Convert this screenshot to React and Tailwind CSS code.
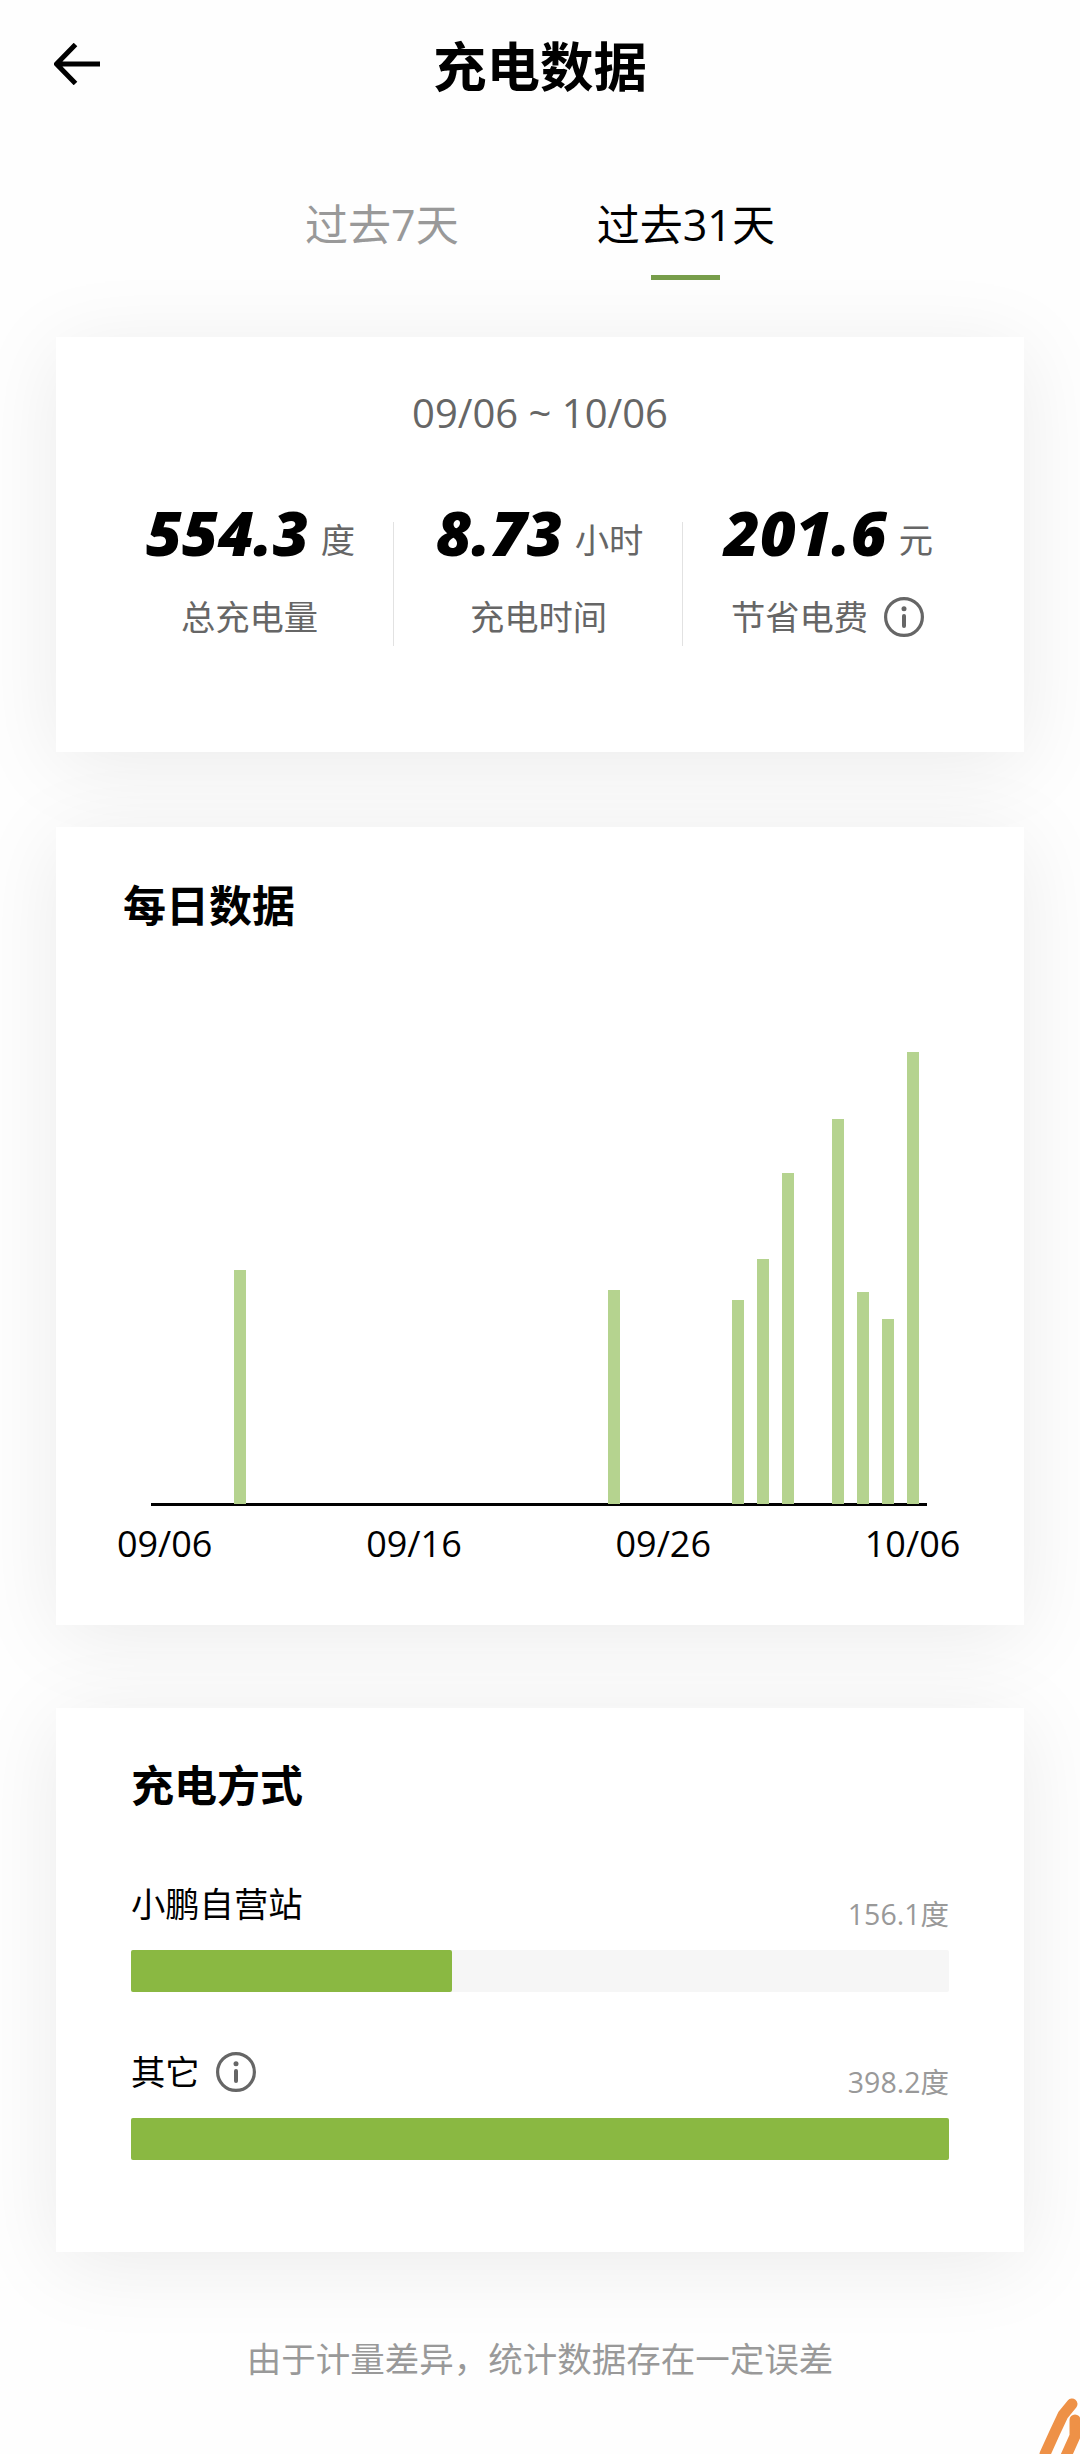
import React, { useState } from "react";

const DAYS = 31;

const daily = {
  3: 234,
  18: 214,
  23: 204,
  24: 245,
  25: 331,
  27: 385,
  28: 212,
  29: 185,
  30: 452,
};

const axisLabels = ["09/06", "09/16", "09/26", "10/06"];

const stats = [
  { value: "554.3", unit: "度", label: "总充电量" },
  { value: "8.73", unit: "小时", label: "充电时间" },
  { value: "201.6", unit: "元", label: "节省电费", info: true },
];

const methods = [
  { name: "小鹏自营站", value: 156.1 },
  { name: "其它", value: 398.2, info: true },
];

const InfoIcon = () => (
  <svg className="w-10 h-10 shrink-0 text-[#666]" viewBox="0 0 40 40" fill="none">
    <circle cx="20" cy="20" r="18.4" stroke="currentColor" strokeWidth="3.2" />
    <circle cx="20" cy="11.8" r="2.5" fill="currentColor" />
    <path d="M20 19v10" stroke="currentColor" strokeWidth="4" strokeLinecap="round" />
  </svg>
);

const Card = ({ className, children }) => (
  <section
    className={`mx-14 bg-white shadow-[0_12px_80px_rgba(0,0,0,0.08)] ${className}`}
  >
    {children}
  </section>
);

const Header = () => (
  <header className="grid grid-cols-[200px_1fr_200px] items-center h-[132px]">
    <button type="button" className="ml-[54px] -mt-1 w-[46px] h-[42px]" aria-label="返回">
      <svg viewBox="0 0 46 42" className="w-[46px] h-[42px]" fill="none" stroke="#000" strokeWidth="5">
        <path d="M21.5 1.5 2.5 21 21.5 40.5M2.5 21h43.5" strokeLinejoin="round" />
      </svg>
    </button>
    <h1 className="pt-0.5 text-center text-[53.5px] leading-[80px] font-bold">充电数据</h1>
  </header>
);

const Tabs = ({ active, onChange }) => (
  <nav className="flex justify-center gap-[138px] mt-[60px] h-[88px]">
    {["过去7天", "过去31天"].map((tab, i) => (
      <button
        key={tab}
        type="button"
        onClick={() => onChange(i)}
        className={`flex flex-col items-center text-[43px] leading-[66px] whitespace-nowrap ${
          active === i ? "text-black" : "text-[#999]"
        }`}
      >
        {tab}
        {active === i && <span className="mt-[17px] w-[69px] h-[5px] bg-[#779d4a]" />}
      </button>
    ))}
  </nav>
);

const Summary = () => (
  <Card className="mt-[57px] h-[415px] pt-[46px]">
    <p className="text-center text-[40px] leading-[60px] text-[#666]">09/06 ~ 10/06</p>
    <div className="flex mt-[47px] pl-[49px]">
      {stats.map((item, i) => (
        <div key={item.label} className="relative w-[289px]">
          <div className="flex items-end justify-center pt-[4px] pl-[2px] h-[80px] gap-[12px]">
            <span className="text-[62px] leading-[76px] font-extrabold italic">
              {item.value}
            </span>
            <span className="pb-[5px] text-[34.3px] leading-[50px] text-[#666]">
              {item.unit}
            </span>
          </div>
          <div className="flex items-center justify-center gap-[16px] mt-[22px] h-[50px] text-[34.3px] leading-[50px] text-[#666]">
            {item.label}
            {item.info && <InfoIcon />}
          </div>
          {i < 2 && <span className="absolute right-0 top-[32px] w-[1.5px] h-[124px] bg-[#e2e2e2]" />}
        </div>
      ))}
    </div>
  </Card>
);

const DailyChart = () => (
  <Card className="mt-[75px] h-[798px] pt-[47px]">
    <h2 className="ml-[67px] text-[43px] leading-[64px] font-bold">每日数据</h2>
    <div className="relative ml-[95px] mt-[86px] w-[776px] h-[482px] border-b-3 border-black">
      <div className="absolute left-[1.4px] bottom-[-1px] w-[773px] flex items-end">
        {Array.from({ length: DAYS }, (_, i) => (
          <div key={i} className="flex-1 flex justify-center">
            {daily[i] && <div className="w-3 bg-[#b5d38f]" style={{ height: daily[i] }} />}
          </div>
        ))}
      </div>
    </div>
    <div className="flex ml-[-16px] mt-[11px] text-[36px] leading-[54px]">
      {axisLabels.map((label) => (
        <span key={label} className="w-[249.3px] shrink-0 text-center">
          {label}
        </span>
      ))}
    </div>
  </Card>
);

const Methods = () => {
  const max = Math.max(...methods.map((m) => m.value));

  return (
    <Card className="mt-[83px] h-[544px] pl-[75px] pr-[75px] pt-[46px]">
      <h2 className="text-[43px] leading-[64px] font-bold">充电方式</h2>
      <div className="mt-[60px] flex flex-col gap-[54px]">
        {methods.map((m) => (
          <div key={m.name}>
            <div className="flex justify-between h-[72px]">
              <div className="flex items-center gap-[16px] h-[52px] text-[34.3px] leading-[52px]">
                {m.name}
                {m.info && <InfoIcon />}
              </div>
              <span className="mt-[15px] text-[28.5px] leading-[42px] text-[#999]">
                {m.value}度
              </span>
            </div>
            <div className="h-[42px] rounded-[2px] bg-[#f6f6f6]">
              <div
                className="h-full rounded-[2px] bg-[#8ab842]"
                style={{ width: `${(m.value / max) * 100}%` }}
              />
            </div>
          </div>
        ))}
      </div>
    </Card>
  );
};

const App = () => {
  const [tab, setTab] = useState(1);

  return (
    <div className="relative w-[1080px] h-[2454px] overflow-hidden bg-[#fefefe] text-black font-['Open_Sans','Noto_Sans_CJK_SC',sans-serif]">
      <Header />
      <Tabs active={tab} onChange={setTab} />
      <Summary />
      <DailyChart />
      <Methods />
      <p className="mt-[82px] text-center text-[34.5px] leading-[50px] text-[#999]">
        由于计量差异，统计数据存在一定误差
      </p>
      <svg
        className="absolute right-0 bottom-0 w-20 h-20"
        viewBox="0 0 80 80"
        fill="none"
        stroke="#ee9147"
        strokeWidth="11"
        strokeLinecap="round"
        strokeLinejoin="round"
      >
        <path d="M72 30 63 41 55 58 45 80" />
        <path d="M75 46 75 62 66 82" />
      </svg>
    </div>
  );
};

export default App;
